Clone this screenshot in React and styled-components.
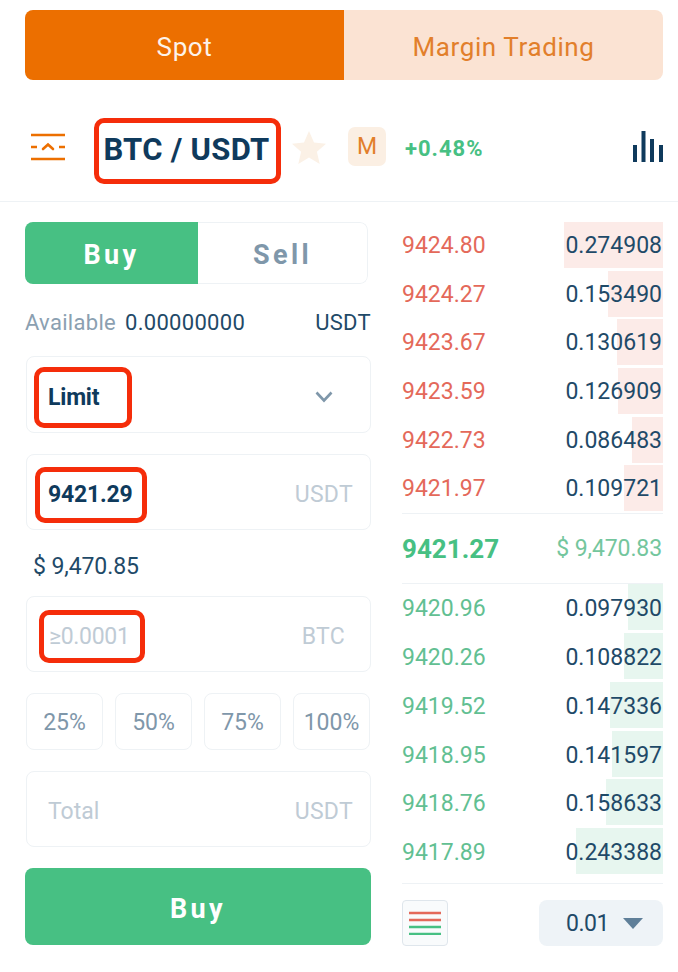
import styled, { createGlobalStyle } from 'styled-components'

const orange = '#ec6f00'
const navy = '#0f3a5c'
const ink = '#1f4a68'
const green = '#47c083'
const red = '#e4695a'
const line = '#eef2f5'

const asks = [
  ['9424.80', '0.274908', 99],
  ['9424.27', '0.153490', 55],
  ['9423.67', '0.130619', 46],
  ['9423.59', '0.126909', 45],
  ['9422.73', '0.086483', 31],
  ['9421.97', '0.109721', 39],
]
const bids = [
  ['9420.96', '0.097930', 35],
  ['9420.26', '0.108822', 39],
  ['9419.52', '0.147336', 53],
  ['9418.95', '0.141597', 51],
  ['9418.76', '0.158633', 57],
  ['9417.89', '0.243388', 87],
]

const Global = createGlobalStyle`
  html, body {
    margin: 0;
    background: #fff;
    overflow: hidden;
  }
  body {
    font-family: Roboto, "Liberation Sans", sans-serif;
    color: ${navy};
  }
  * { box-sizing: border-box; }
`

const Page = styled.div`
  width: 678px;
  height: 972px;
  padding-top: 10px;
`

const Tabs = styled.div`
  display: flex;
  height: 70px;
  margin: 0 15px 0 25px;
  border-radius: 8px;
  overflow: hidden;
`
const Tab = styled.div`
  flex: 1;
  display: flex;
  align-items: center;
  justify-content: center;
  padding-top: 4px;
  font-size: 26px;
  letter-spacing: 0.6px;
  background: ${p => (p.$active ? orange : '#fbe3d3')};
  color: ${p => (p.$active ? '#fdf3ea' : '#e27f2b')};
`

const Header = styled.div`
  display: flex;
  align-items: center;
  height: 122px;
  padding: 12px 15px 0 31px;
  border-bottom: 1px solid ${line};
`
const Highlight = styled.span`
  display: inline-flex;
  align-items: center;
  border: 5px solid #f52d0a;
  border-radius: 10px;
  background: #fff;
`
const Pair = styled(Highlight)`
  height: 66px;
  width: 187px;
  margin: 8px 11px 0 29px;
  padding: 0 2px 3px 0;
  justify-content: center;
  font-size: 31px;
  font-weight: 700;
  letter-spacing: 0.3px;
`
const Star = styled.svg`
  margin-top: 2px;
`
const Badge = styled.div`
  display: flex;
  align-items: center;
  justify-content: center;
  width: 38px;
  height: 39px;
  margin: 0 19px 0 22px;
  border-radius: 7px;
  background: #fbefe3;
  color: #e27f2b;
  font-size: 23px;
`
const Change = styled.div`
  margin-top: 4px;
  font-size: 22px;
  font-weight: 700;
  letter-spacing: 1px;
  color: ${green};
`
const BarsIcon = styled.svg`
  margin-left: auto;
`

const Main = styled.div`
  display: flex;
  padding: 20px 15px 0 25px;
`
const Form = styled.div`
  width: 346px;
  flex-shrink: 0;
`
const Side = styled.div`
  display: flex;
  width: 343px;
  height: 62px;
  border-radius: 8px;
  overflow: hidden;
`
const SideButton = styled.div`
  display: flex;
  align-items: center;
  justify-content: center;
  padding-top: 4px;
  width: 173px;
  background: ${green};
  color: #fff;
  font-size: 27px;
  font-weight: 700;
  letter-spacing: 3.4px;
`
const SellButton = styled(SideButton)`
  width: auto;
  flex: 1;
  background: #fff;
  color: #7f97aa;
  border: 1px solid ${line};
  border-left: none;
  border-radius: 0 8px 8px 0;
`
const Balance = styled.div`
  display: flex;
  align-items: center;
  height: 72px;
  padding-top: 4px;
  font-size: 22px;
  letter-spacing: 0.3px;
  color: ${ink};
`
const Muted = styled.span`
  color: #8ba0b1;
  margin-right: 9px;
`
const Unit = styled.span`
  margin-left: auto;
`
const Field = styled.div`
  display: flex;
  align-items: center;
  height: ${p => (p.$tall ? 77 : 76)}px;
  margin: 0 0 21px 1px;
  padding: 5px 17px 0 7px;
  border: 1px solid ${line};
  border-radius: 8px;
  font-size: 23px;
`
const Value = styled(Highlight)`
  height: ${p => p.$h}px;
  width: ${p => p.$w}px;
  margin-left: ${p => p.$ml || 0}px;
  padding-left: ${p => p.$pl}px;
  font-weight: 700;
  letter-spacing: -0.2px;
`
const Placeholder = styled.span`
  color: #bfcbd5;
  letter-spacing: 0.3px;
`
const Hint = styled(Placeholder)`
  font-weight: 400;
  letter-spacing: -0.3px;
`
const PlainLabel = styled(Placeholder)`
  margin-left: 14px;
  letter-spacing: 0;
`
const FieldUnit = styled(Placeholder)`
  margin: 0 ${p => p.$mr || 0}px 0 auto;
`
const Chevron = styled.svg`
  margin: 0 20px 0 auto;
`
const Usd = styled.div`
  display: flex;
  align-items: center;
  height: 45px;
  margin: -7px 0 7px 8px;
  font-size: 23px;
  letter-spacing: -0.1px;
  color: ${ink};
`
const Percents = styled.div`
  display: grid;
  grid-template-columns: repeat(4, 77px);
  gap: 12px;
  margin: 0 0 21px 1px;
`
const Percent = styled.div`
  display: flex;
  align-items: center;
  justify-content: center;
  height: 57px;
  padding-top: 2px;
  border: 1px solid ${line};
  border-radius: 8px;
  color: #7f97aa;
  font-size: 23px;
`
const Submit = styled.div`
  display: flex;
  align-items: center;
  justify-content: center;
  height: 77px;
  padding-top: 4px;
  border-radius: 8px;
  background: ${green};
  color: #fff;
  font-size: 27px;
  font-weight: 700;
  letter-spacing: 3.4px;
`

const Book = styled.div`
  flex: 1;
  margin-left: 31px;
`
const Rows = styled.div`
  display: flex;
  flex-direction: column;
  gap: 2.7px;
`
const Row = styled.div`
  position: relative;
  display: flex;
  align-items: center;
  justify-content: space-between;
  height: 46px;
  padding-top: ${p => (p.$ask ? 1 : 3)}px;
  font-size: 23px;
`
const Depth = styled.div`
  position: absolute;
  top: 0;
  right: 0;
  bottom: 0;
  background: ${p => (p.$ask ? '#fcebe8' : '#e7f6ef')};
`
const Price = styled.span`
  position: relative;
  color: ${p => (p.$ask ? red : '#62bf92')};
`
const Amount = styled.span`
  position: relative;
  margin-right: 1px;
  color: ${ink};
`
const Mid = styled.div`
  display: flex;
  align-items: center;
  justify-content: space-between;
  height: 71px;
  margin-top: 2px;
  border-top: 1px solid ${line};
  border-bottom: 1px solid ${line};
`
const Last = styled.span`
  font-size: 26px;
  font-weight: 700;
  color: ${green};
`
const LastUsd = styled.span`
  margin-right: 1px;
  font-size: 23px;
  letter-spacing: -0.1px;
  color: #74c69d;
`
const BookFooter = styled.div`
  display: flex;
  align-items: center;
  justify-content: space-between;
  margin-top: 9px;
  padding-top: 16px;
  border-top: 1px solid ${line};
`
const LayoutButton = styled.div`
  display: flex;
  align-items: center;
  justify-content: center;
  width: 46px;
  height: 46px;
  border: 1.5px solid #dfe6ec;
  border-radius: 4px;
  background: #f9fbfc;
`
const Precision = styled.div`
  display: flex;
  align-items: center;
  gap: 14px;
  justify-content: center;
  width: 124px;
  height: 46px;
  padding: 2px 0 0 7px;
  border-radius: 8px;
  background: #eef3f7;
  font-size: 23px;
  letter-spacing: -0.4px;
  color: ${ink};
`
const Caret = styled.svg`
  margin-top: -1px;
`

function OrderRow({ price, amount, depth, ask }) {
  return (
    <Row $ask={ask}>
      <Depth $ask={ask} style={{ width: `${depth}px` }} />
      <Price $ask={ask}>{price}</Price>
      <Amount>{amount}</Amount>
    </Row>
  )
}

export default function App() {
  return (
    <Page>
      <Global />
      <Tabs>
        <Tab $active>Spot</Tab>
        <Tab>Margin Trading</Tab>
      </Tabs>

      <Header>
        <svg width="34" height="28" viewBox="0 0 34 28" fill="none" stroke={orange} strokeWidth="2.6">
          <path d="M0 2h34M0 26h34" />
          <path d="M0 14h6M28 14h6" />
          <path d="M12 16l5-4.5 5 4.5" strokeLinecap="round" />
        </svg>
        <Pair>BTC / USDT</Pair>
        <Star width="34" height="33" viewBox="0 0 34 33">
          <path d="M17 0l5 11.600 12 1.100-9.100 8 2.800 12.300L17 26.500 6.300 33l2.800-12.300-9.100-8 12-1.100z" fill="#fbf1e6" />
        </Star>
        <Badge>M</Badge>
        <Change>+0.48%</Change>
        <BarsIcon width="30" height="31" viewBox="0 0 30 31" fill={navy}>
          <rect x="0" y="14" width="4" height="17" />
          <rect x="8.500" y="0" width="4" height="31" />
          <rect x="17" y="8" width="4" height="23" />
          <rect x="26" y="14" width="4" height="17" />
        </BarsIcon>
      </Header>

      <Main>
        <Form>
          <Side>
            <SideButton>Buy</SideButton>
            <SellButton>Sell</SellButton>
          </Side>
          <Balance>
            <Muted>Available</Muted>
            0.00000000
            <Unit>USDT</Unit>
          </Balance>
          <Field $tall>
            <Value $w={98} $h={61} $pl={9}>Limit</Value>
            <Chevron width="18" height="12" viewBox="0 0 18 12" fill="none" stroke="#7f97aa" strokeWidth="2.600">
              <path d="M1.500 1.500L9 9.500l7.500-8" />
            </Chevron>
          </Field>
          <Field>
            <Value $w={112} $h={56} $ml={1} $pl={8}>9421.29</Value>
            <FieldUnit>USDT</FieldUnit>
          </Field>
          <Usd>$ 9,470.85</Usd>
          <Field>
            <Value $w={106} $h={53} $ml={5} $pl={5}>
              <Hint>≥0.0001</Hint>
            </Value>
            <FieldUnit $mr={8}>BTC</FieldUnit>
          </Field>
          <Percents>
            <Percent>25%</Percent>
            <Percent>50%</Percent>
            <Percent>75%</Percent>
            <Percent>100%</Percent>
          </Percents>
          <Field>
            <PlainLabel>Total</PlainLabel>
            <FieldUnit>USDT</FieldUnit>
          </Field>
          <Submit>Buy</Submit>
        </Form>

        <Book>
          <Rows>
            {asks.map(([price, amount, depth]) => (
              <OrderRow key={price} price={price} amount={amount} depth={depth} ask />
            ))}
          </Rows>
          <Mid>
            <Last>9421.27</Last>
            <LastUsd>$ 9,470.83</LastUsd>
          </Mid>
          <Rows>
            {bids.map(([price, amount, depth]) => (
              <OrderRow key={price} price={price} amount={amount} depth={depth} />
            ))}
          </Rows>
          <BookFooter>
            <LayoutButton>
              <svg width="32" height="24" viewBox="0 0 32 24" strokeWidth="2.400">
                <path d="M0 2h32M0 9h32" stroke={red} />
                <path d="M0 16h32M0 23h32" stroke={green} />
              </svg>
            </LayoutButton>
            <Precision>
              0.01
              <Caret width="20" height="11" viewBox="0 0 20 11">
                <path d="M0 0h20L10 11z" fill="#5f7f99" />
              </Caret>
            </Precision>
          </BookFooter>
        </Book>
      </Main>
    </Page>
  )
}
